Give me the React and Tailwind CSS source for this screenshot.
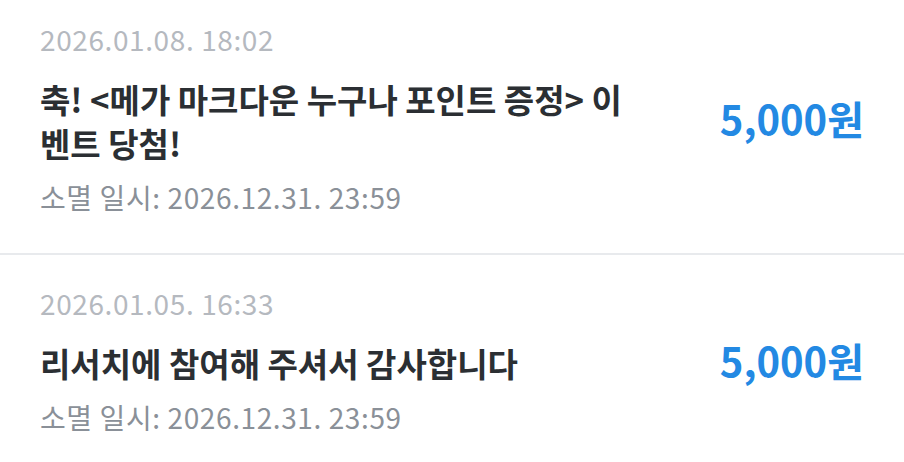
import React from "react";

const items = [
  {
    date: "2026.01.08. 18:02",
    title: "축! <메가 마크다운 누구나 포인트 증정> 이벤트 당첨!",
    expire: "2026.12.31. 23:59",
    amount: "5,000원",
  },
  {
    date: "2026.01.05. 16:33",
    title: "리서치에 참여해 주셔서 감사합니다",
    expire: "2026.12.31. 23:59",
    amount: "5,000원",
  },
];

const PointItem = ({ item, first }) => (
  <div
    className={`flex items-center justify-between px-[40px] pb-[38px] ${
      first ? "pt-[21px]" : "pt-[30px]"
    }`}
  >
    <div className="w-[590px]">
      <p className="text-[28px] leading-[36px] tracking-[0.6px] text-[#b5b9bf]">
        {item.date}
      </p>
      <p className="mt-[20px] text-[33px] leading-[44px] font-bold text-[#2b2f33]">
        {item.title}
      </p>
      <p className="mt-[14px] text-[28px] leading-[36px] tracking-[0.6px] text-[#8a9098]">
        소멸 일시: {item.expire}
      </p>
    </div>
    <span className="text-[40px] font-bold text-[#2389e3]">{item.amount}</span>
  </div>
);

export default function App() {
  return (
    <div className="w-[904px] h-[462px] bg-white font-['Noto_Sans_CJK_KR',sans-serif] overflow-hidden">
      {items.map((item, i) => (
        <div key={i} className={i > 0 ? "border-t-2 border-[#e8eaed]" : ""}>
          <PointItem item={item} first={i === 0} />
        </div>
      ))}
    </div>
  );
}
